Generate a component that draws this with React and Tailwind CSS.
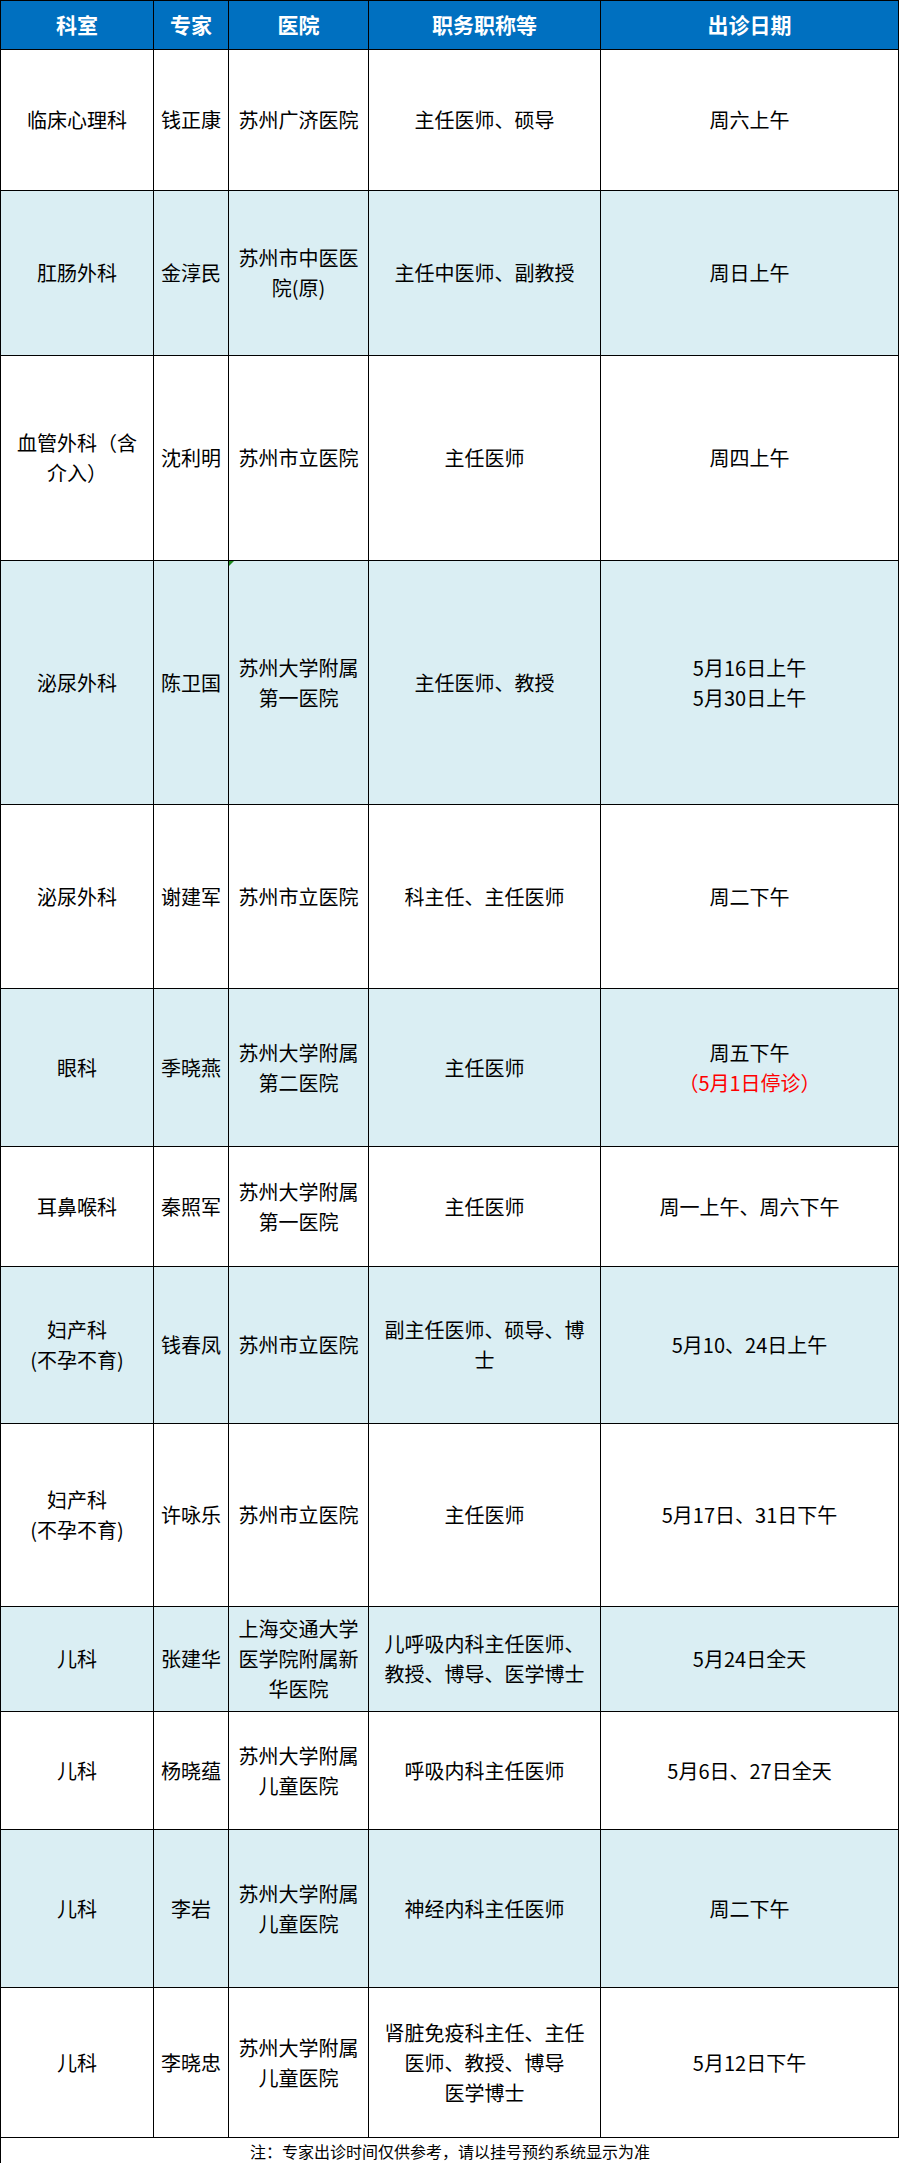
const rows = [
  { h: "h-[141px]", dept: "临床心理科", name: "钱正康", hosp: "苏州广济医院", title: "主任医师、硕导", date: "周六上午" },
  { h: "h-[165px]", alt: true, dept: "肛肠外科", name: "金淳民", hosp: "苏州市中医医院(原)", title: "主任中医师、副教授", date: "周日上午" },
  { h: "h-[205px]", dept: "血管外科（含介入）", name: "沈利明", hosp: "苏州市立医院", title: "主任医师", date: "周四上午" },
  {
    h: "h-[244px]",
    alt: true,
    mark: true,
    dept: "泌尿外科",
    name: "陈卫国",
    hosp: "苏州大学附属第一医院",
    title: "主任医师、教授",
    date: (
      <>
        5月16日上午
        <br />
        5月30日上午
      </>
    ),
  },
  { h: "h-[184px]", dept: "泌尿外科", name: "谢建军", hosp: "苏州市立医院", title: "科主任、主任医师", date: "周二下午" },
  {
    h: "h-[158px]",
    alt: true,
    dept: "眼科",
    name: "季晓燕",
    hosp: "苏州大学附属第二医院",
    title: "主任医师",
    date: (
      <>
        周五下午
        <br />
        <span className="text-[#ff0000]">（5月1日停诊）</span>
      </>
    ),
  },
  { h: "h-[120px]", dept: "耳鼻喉科", name: "秦照军", hosp: "苏州大学附属第一医院", title: "主任医师", date: "周一上午、周六下午" },
  {
    h: "h-[157px]",
    alt: true,
    dept: (
      <>
        妇产科
        <br />
        (不孕不育)
      </>
    ),
    name: "钱春凤",
    hosp: "苏州市立医院",
    title: "副主任医师、硕导、博士",
    date: "5月10、24日上午",
  },
  {
    h: "h-[183px]",
    dept: (
      <>
        妇产科
        <br />
        (不孕不育)
      </>
    ),
    name: "许咏乐",
    hosp: "苏州市立医院",
    title: "主任医师",
    date: "5月17日、31日下午",
  },
  { h: "h-[105px]", alt: true, dept: "儿科", name: "张建华", hosp: "上海交通大学医学院附属新华医院", title: "儿呼吸内科主任医师、教授、博导、医学博士", date: "5月24日全天" },
  { h: "h-[118px]", dept: "儿科", name: "杨晓蕴", hosp: "苏州大学附属儿童医院", title: "呼吸内科主任医师", date: "5月6日、27日全天" },
  { h: "h-[158px]", alt: true, dept: "儿科", name: "李岩", hosp: "苏州大学附属儿童医院", title: "神经内科主任医师", date: "周二下午" },
  {
    h: "h-[150px]",
    dept: "儿科",
    name: "李晓忠",
    hosp: "苏州大学附属儿童医院",
    title: (
      <>
        肾脏免疫科主任、主任医师、教授、博导
        <br />
        医学博士
      </>
    ),
    date: "5月12日下午",
  },
];

const Cell = ({ children, pad = "px-2", mark }) => (
  <div className={`relative flex items-center justify-center border-r border-b border-black text-center ${pad}`}>
    {mark && (
      <div className="absolute left-0 top-0 h-0 w-0 border-t-[5px] border-r-[5px] border-t-[#1e8a1e] border-r-transparent" />
    )}
    <div>{children}</div>
  </div>
);

const App = () => {
  return (
    <div className="w-[899px] h-[2163px] bg-white font-['Noto_Sans_CJK_SC','Microsoft_YaHei',sans-serif] text-black">
      <div className="border-t border-l border-black">
        {/* header */}
        <div className="grid h-[49px] grid-cols-[153px_75px_140px_232px_298px] bg-[#0070c0] text-[21px] font-bold text-white">
          <Cell>科室</Cell>
          <Cell pad="px-1">专家</Cell>
          <Cell>医院</Cell>
          <Cell>职务职称等</Cell>
          <Cell>出诊日期</Cell>
        </div>

        {rows.map((r, i) => (
          <div
            key={i}
            className={`grid grid-cols-[153px_75px_140px_232px_298px] text-[20px] leading-[30px] ${r.h} ${
              r.alt ? "bg-[#daeef3]" : "bg-white"
            }`}
          >
            <Cell>{r.dept}</Cell>
            <Cell pad="px-1">{r.name}</Cell>
            <Cell mark={r.mark}>{r.hosp}</Cell>
            <Cell>{r.title}</Cell>
            <Cell>{r.date}</Cell>
          </div>
        ))}
      </div>

      {/* note */}
      <div className="flex h-[25px] items-center justify-center border-l border-black text-[16px] leading-[20px]">
        注：专家出诊时间仅供参考，请以挂号预约系统显示为准
      </div>
    </div>
  );
};

export default App;
